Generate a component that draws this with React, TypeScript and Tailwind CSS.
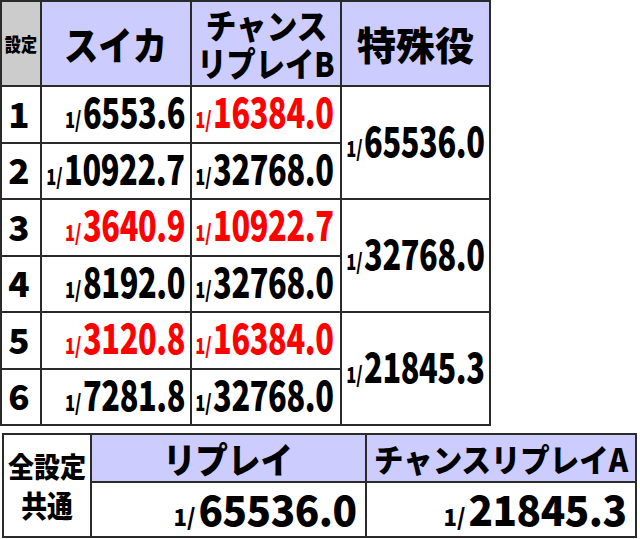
import React from "react";

const FONT = "font-['Noto_Sans_CJK_JP','Noto_Sans',sans-serif]";

function Val({ v, red }: { v: string; red?: boolean }) {
  return (
    <span
      className={`inline-flex origin-right scale-x-[0.75] items-baseline whitespace-nowrap leading-none font-black ${
        red ? "text-[#ff0000]" : "text-black"
      }`}
    >
      <span className="mr-[2px] text-[22px]">1/</span>
      <span className="text-[41px] tracking-[-0.5px]">{v}</span>
    </span>
  );
}

function BigVal({ v }: { v: string }) {
  return (
    <span className="inline-flex origin-right scale-x-[0.96] items-baseline whitespace-nowrap leading-none font-black text-black">
      <span className="mr-[3px] text-[23px]">1/</span>
      <span className="text-[42px] tracking-[-0.5px]">{v}</span>
    </span>
  );
}

const rows = [
  { n: "1", s: "6553.6", sr: false, c: "16384.0", cr: true },
  { n: "2", s: "10922.7", sr: false, c: "32768.0", cr: false },
  { n: "3", s: "3640.9", sr: true, c: "10922.7", cr: true },
  { n: "4", s: "8192.0", sr: false, c: "32768.0", cr: false },
  { n: "5", s: "3120.8", sr: true, c: "16384.0", cr: true },
  { n: "6", s: "7281.8", sr: false, c: "32768.0", cr: false },
];

const special = ["65536.0", "32768.0", "21845.3"];

export default function App() {
  return (
    <div className={`${FONT} h-[539px] w-[640px] overflow-hidden bg-white`}>
      <div className="grid w-[491px] grid-cols-[38px_148px_148px_147px] grid-rows-[83px_repeat(6,54.5px)] gap-[2px] border-2 border-[#2a2a2a] bg-[#2a2a2a]">
        <div className="flex items-center justify-center overflow-visible bg-[#cccccc]">
          <span className="scale-x-[0.85] whitespace-nowrap text-[19px] font-black leading-none text-black">設定</span>
        </div>
        <div className="flex items-center justify-center bg-[#ccccff]">
          <span className="scale-x-[0.88] whitespace-nowrap text-[39px] font-black leading-none text-black">スイカ</span>
        </div>
        <div className="flex flex-col items-center justify-center gap-[4px] bg-[#ccccff] pt-[1px]">
          <span className="scale-x-[0.9] whitespace-nowrap text-[34px] font-black leading-[34px] text-black">チャンス</span>
          <span className="scale-x-[0.86] whitespace-nowrap text-[34px] font-black leading-[34px] text-black">リプレイB</span>
        </div>
        <div className="flex items-center justify-center bg-[#ccccff]">
          <span className="whitespace-nowrap text-[39px] font-black leading-none text-black">特殊役</span>
        </div>

        {rows.map((r, i) => (
          <React.Fragment key={r.n}>
            <div className="flex items-center justify-center bg-white pr-[4px] pb-[4px]">
              <span className="text-[35px] font-black leading-none text-black">{r.n}</span>
            </div>
            <div className="flex items-center justify-end bg-white pr-[5px] pb-[7px]">
              <Val v={r.s} red={r.sr} />
            </div>
            <div className="flex items-center justify-end bg-white pr-[6px] pb-[7px]">
              <Val v={r.c} red={r.cr} />
            </div>
            {i % 2 === 0 && (
              <div className="row-span-2 flex items-center justify-end bg-white pr-[4px] pb-[6px]">
                <Val v={special[i / 2]} />
              </div>
            )}
          </React.Fragment>
        ))}
      </div>

      <div className="ml-[2px] mt-[7px] grid w-[635px] grid-cols-[86px_273px_268px] grid-rows-[46px_53px] gap-[2px] border-2 border-[#2a2a2a] bg-[#2a2a2a]">
        <div className="row-span-2 flex flex-col items-center justify-center gap-[8px] bg-white pb-[2px]">
          <span className="scale-x-[0.93] whitespace-nowrap text-[28px] font-black leading-[30px] text-black">全設定</span>
          <span className="scale-x-[0.86] whitespace-nowrap text-[30px] font-black leading-[30px] text-black">共通</span>
        </div>
        <div className="flex items-center justify-center bg-[#ccccff]">
          <span className="scale-x-[0.9] whitespace-nowrap text-[36px] font-black leading-none text-black">リプレイ</span>
        </div>
        <div className="flex items-center justify-center bg-[#ccccff]">
          <span className="scale-x-[0.92] whitespace-nowrap text-[32px] font-black leading-none text-black">チャンスリプレイA</span>
        </div>
        <div className="flex items-center justify-end bg-white pr-[8px] pb-[4px]">
          <BigVal v="65536.0" />
        </div>
        <div className="flex items-center justify-end bg-white pr-[8px] pb-[4px]">
          <BigVal v="21845.3" />
        </div>
      </div>
    </div>
  );
}
